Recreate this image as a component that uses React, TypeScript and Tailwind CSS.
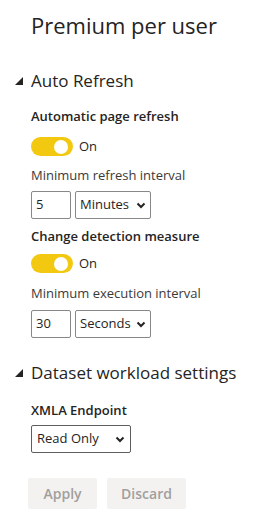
import React from 'react';

const font = { fontFamily: '"Open Sans", "Noto Sans", sans-serif' };

function Caret() {
  return (
    <svg width="8" height="8" viewBox="0 0 8 8" className="shrink-0">
      <polygon points="8,0 8,8 0,8" fill="#252423" />
    </svg>
  );
}

function Toggle() {
  return (
    <div className="flex items-center gap-[6px]">
      <div className="w-[42px] h-[19px] rounded-full bg-[#f2c811] flex items-center justify-end pr-[5px]">
        <div className="w-[14px] h-[14px] rounded-full bg-white" />
      </div>
      <span className="text-[13px] leading-[19px] text-[#252423]">On</span>
    </div>
  );
}

function Chevron() {
  return (
    <svg width="10" height="7" viewBox="0 0 10 7" className="shrink-0">
      <path d="M1.5 1.5 L5 5 L8.5 1.5" fill="none" stroke="#252423" strokeWidth="2" />
    </svg>
  );
}

function Interval({ value, unit }: { value: string; unit: string }) {
  return (
    <div className="flex gap-[4px]">
      <div className="w-[40px] h-[28px] border border-[#8a8886] rounded-[2px] flex items-center pl-[4px] text-[13px] text-[#252423]">
        {value}
      </div>
      <div className="w-[76px] h-[28px] border border-[#8a8886] rounded-[2px] flex items-center justify-between pl-[4px] pr-[4px] text-[13px] text-[#252423]">
        <span>{unit}</span>
        <Chevron />
      </div>
    </div>
  );
}

export default function App() {
  return (
    <div className="w-[263px] h-[524px] bg-white overflow-hidden" style={font}>
      <div className="pl-[31px] pt-[10px]">
        <h1 className="text-[22px] leading-[30px] text-[#252423]">Premium per user</h1>
      </div>

      <div className="flex items-center gap-[8px] pl-[15px] mt-[30px]">
        <Caret />
        <span className="text-[17px] leading-[22px] text-[#252423]">Auto Refresh</span>
      </div>

      <div className="pl-[31px] mt-[15px] flex flex-col">
        <div className="text-[13px] leading-[18px] font-semibold text-[#252423]">Automatic page refresh</div>
        <div className="mt-[12px]"><Toggle /></div>
        <div className="mt-[10px] text-[13px] leading-[18px] text-[#3b3a39]">Minimum refresh interval</div>
        <div className="mt-[7px]"><Interval value="5" unit="Minutes" /></div>
        <div className="mt-[8px] text-[13px] leading-[18px] font-semibold text-[#252423]">Change detection measure</div>
        <div className="mt-[9px]"><Toggle /></div>
        <div className="mt-[11px] text-[13px] leading-[18px] text-[#3b3a39]">Minimum execution interval</div>
        <div className="mt-[8px]"><Interval value="30" unit="Seconds" /></div>
      </div>

      <div className="flex items-center gap-[8px] pl-[15px] mt-[24px]">
        <Caret />
        <span className="text-[17px] leading-[22px] text-[#252423]">Dataset workload settings</span>
      </div>

      <div className="pl-[31px] mt-[17px] flex flex-col">
        <div className="text-[13px] leading-[18px] font-semibold text-[#252423]">XMLA Endpoint</div>
        <div className="mt-[6px] w-[100px] h-[28px] border border-[#605e5c] rounded-[2px] flex items-center justify-between pl-[5px] pr-[5px] text-[13px] text-[#252423]">
          <span>Read Only</span>
          <Chevron />
        </div>
      </div>

      <div className="flex gap-[10px] pl-[28px] mt-[25px]">
        <button className="w-[69px] h-[31px] rounded-[2px] bg-[#f3f2f1] text-[14px] font-semibold text-[#a19f9d]">Apply</button>
        <button className="w-[79px] h-[31px] rounded-[2px] bg-[#f3f2f1] text-[14px] font-semibold text-[#a19f9d]">Discard</button>
      </div>
    </div>
  );
}
